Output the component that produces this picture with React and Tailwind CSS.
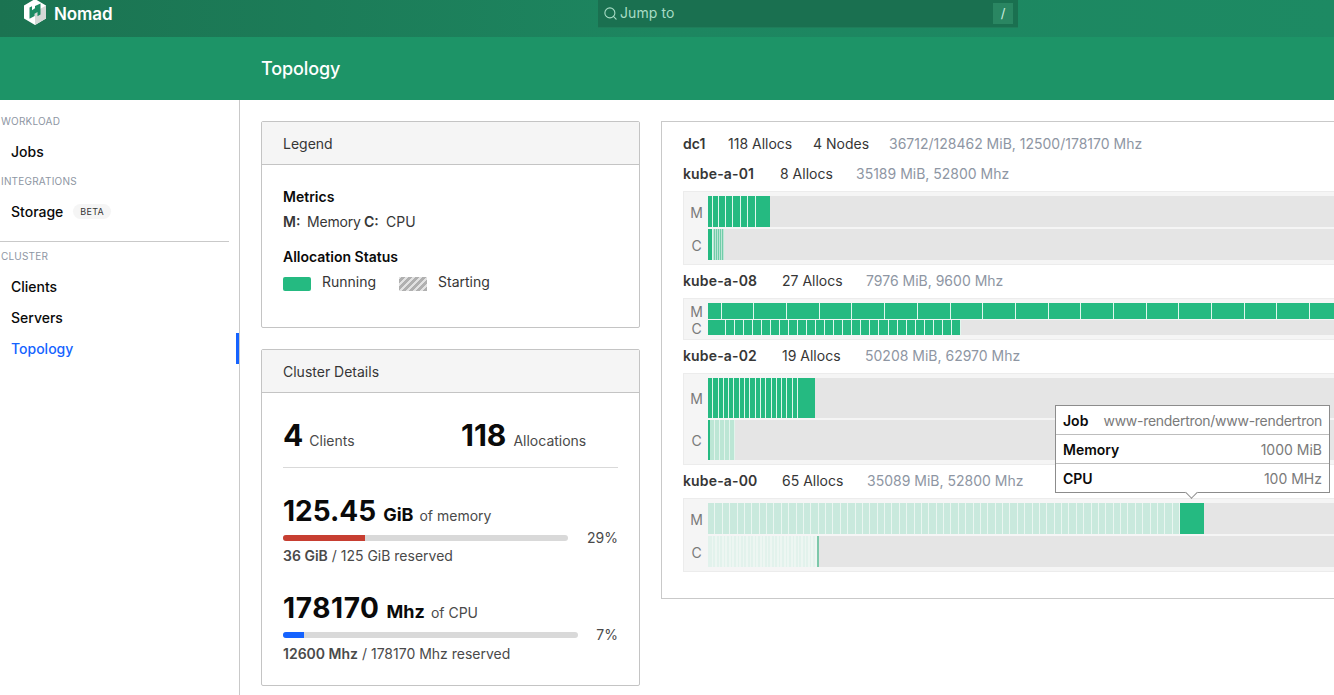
import { Search } from "lucide-react";

const tones = {
  solid: "bg-[#25ba81] border-r border-[#e0f7ee]",
  flat: "bg-[#25ba81]",
  thin: "bg-[#25ba81] opacity-60",
  light: "bg-[#bce6d5] border-r border-[#e2f4ec]",
  lightBare: "bg-[#bce6d5]",
  pale: "bg-[#c9e9dd] border-r border-[#eaf6f1]",
  faint: "bg-[#e2f2ec]",
  faintAlt: "bg-[#edf6f2]",
  mark: "bg-[#7cc8aa]",
};

const seg = (w, tone = "solid") => ({ w, tone });
const times = (n, w, tone) => Array.from({ length: n }, () => seg(w, tone));
const zebra = (n, w, a, b) => Array.from({ length: n }, (_, i) => seg(w, i % 2 ? b : a));

const nodes = [
  {
    name: "kube-a-01",
    allocs: "8 Allocs",
    nameWidth: "w-[97px]",
    allocWidth: "w-[76px]",
    stats: "35189 MiB, 52800 Mhz",
    row: "h-[31px]",
    cpuRow: "h-[31px]",
    gap: "mt-[2px]",
    mem: [seg(5), seg(6), seg(7), seg(7), seg(7.5), seg(7.5), seg(8), seg(14, "flat")],
    cpu: [seg(2, "flat"), seg(3, "solid"), ...zebra(11, 1, "lightBare", "thin")],
  },
  {
    name: "kube-a-08",
    allocs: "27 Allocs",
    nameWidth: "w-[99px]",
    allocWidth: "w-[84px]",
    stats: "7976 MiB, 9600 Mhz",
    row: "h-[16px]",
    cpuRow: "h-[15px]",
    gap: "mt-px",
    mem: [seg(13.7), ...times(20, 32.7)],
    cpu: [seg(17.7), ...times(26, 9.06)],
  },
  {
    name: "kube-a-02",
    allocs: "19 Allocs",
    nameWidth: "w-[99px]",
    allocWidth: "w-[83px]",
    stats: "50208 MiB, 62970 Mhz",
    row: "h-[40px]",
    cpuRow: "h-[40px]",
    gap: "mt-[2px]",
    mem: [...times(17, 5.3), seg(17, "flat")],
    cpu: [seg(2, "flat"), ...times(5, 5, "light")],
  },
  {
    name: "kube-a-00",
    allocs: "65 Allocs",
    nameWidth: "w-[99px]",
    allocWidth: "w-[85px]",
    stats: "35089 MiB, 52800 Mhz",
    row: "h-[31px]",
    cpuRow: "h-[31px]",
    gap: "mt-[2px]",
    mem: [...times(64, 7.375, "pale"), seg(24, "flat")],
    cpu: [seg(2, "faint"), ...zebra(62, 1.72, "faint", "faintAlt"), seg(2, "mark")],
  },
];

function Bar({ segs, className }) {
  return (
    <div className={`flex flex-1 bg-[#e5e5e5] ${className}`}>
      {segs.map((s, i) => (
        <div key={i} className={`flex-none box-border h-full ${tones[s.tone]}`} style={{ width: s.w }} />
      ))}
    </div>
  );
}

function Node({ node }) {
  return (
    <div>
      <div className="flex h-[33px] items-center pb-[2px] text-sm">
        <span className={`font-semibold tracking-[0.15px] text-[#363636] ${node.nameWidth}`}>{node.name}</span>
        <span className={`text-[#363636] ${node.allocWidth}`}>{node.allocs}</span>
        <span className="text-[#8e96a3]">{node.stats}</span>
      </div>
      <div className="border border-[#ececec] bg-[#f5f5f5] py-1">
        <div className={`flex ${node.row}`}>
          <div className="flex w-[24px] flex-none items-center justify-center pt-[2px] pl-px text-sm text-[#7a7a7a]">M</div>
          <Bar segs={node.mem} className={node.row} />
        </div>
        <div className={`flex ${node.cpuRow} ${node.gap}`}>
          <div className="flex w-[24px] flex-none items-center justify-center pt-[2px] pl-px text-sm text-[#7a7a7a]">C</div>
          <Bar segs={node.cpu} className={node.cpuRow} />
        </div>
      </div>
    </div>
  );
}

function Card({ title, className, children }) {
  return (
    <div className={`rounded-[2px] border border-[#c4c4c4] bg-white ${className}`}>
      <div className="flex h-[43px] items-center border-b border-[#c4c4c4] bg-[#f5f5f5] px-[21px] pt-px text-sm text-[#363636]">
        {title}
      </div>
      {children}
    </div>
  );
}

function NavLabel({ children, className = "" }) {
  return <div className={`pl-px text-[10px] leading-[14px] tracking-[0.2px] text-[#8e96a3] uppercase ${className}`}>{children}</div>;
}

function NavItem({ children, active }) {
  return (
    <div
      className={`flex h-[31px] items-center border-r-[3px] pl-[11px] text-sm font-medium ${
        active ? "border-[#1563ff] text-[#1563ff]" : "border-transparent text-[#0a0a0a]"
      }`}
    >
      {children}
    </div>
  );
}

function Metric({ value, valueClass = "", unit, label, barWidth, fill, fillWidth, pct, used, total, footClass = "mt-px" }) {
  return (
    <div>
      <div className="flex h-[32px] items-baseline text-[#0a0a0a]">
        <span className={`text-[28px] leading-[32px] font-bold ${valueClass}`}>{value}</span>
        <span className="ml-[7px] text-lg font-bold">{unit}</span>
        <span className="ml-[6px] text-sm text-[#4a4a4a]">{label}</span>
      </div>
      <div className="mt-[4px] flex h-[14px] items-center justify-between">
        <div className={`h-[6px] overflow-hidden rounded-full bg-[#d9d9d9] ${barWidth}`}>
          <div className={`h-full ${fill} ${fillWidth}`} />
        </div>
        <span className="text-sm text-[#4a4a4a]">{pct}</span>
      </div>
      <div className={`text-sm leading-[20px] text-[#4a4a4a] ${footClass}`}>
        <span className="font-semibold">{used}</span> / {total}
      </div>
    </div>
  );
}

export default function App() {
  return (
    <div className="h-[695px] w-[1334px] overflow-hidden bg-white font-['Inter',sans-serif]">
      <div className="relative flex h-[37px] overflow-hidden bg-gradient-to-r from-[#1b7351] via-[#1d8660] to-[#1d8a63]">
        <div className="flex w-[598px] flex-none items-start pl-6">
          <svg viewBox="0 0 22 26" className="-mt-px h-[26px] w-[22px] flex-none">
            <path d="M11 0 22 6.5v13L11 26 0 19.5v-13Z" fill="#fff" />
            <path d="M11 13 22 6.5v13L11 26Z" fill="#d4d8d6" />
            <path d="M5.5 8.5 8 7.2v4l3-1.9V7l5.5-2.6v11.2l-3 1.7v-4.2l-2.9 1.7V17l-5.1 2.8Z" fill="#1d8a63" />
          </svg>
          <span className="mt-[4px] ml-2 text-[17px] leading-[20px] font-semibold tracking-[-0.1px] text-white">Nomad</span>
        </div>
        <div className="flex h-[28px] w-[420px] flex-none items-center border-b border-[#1f7d5a] bg-[#1a7050] px-[5px] pb-px text-sm text-[#a8dcc5]">
          <Search className="h-[15px] w-[15px] flex-none" strokeWidth={1.75} />
          <span className="ml-[2px] flex-1 tracking-[0.1px]">Jump to</span>
          <span className="flex h-[21px] w-[20px] items-center justify-center bg-[#2a8662] text-[13px] text-[#cdeee0]">/</span>
        </div>
      </div>

      <div className="flex h-[63px] items-center bg-[#1d9467] pt-px pl-[261px] text-lg font-medium tracking-[-0.1px] text-white">Topology</div>

      <div className="flex h-[595px] overflow-hidden">
        <div className="w-[240px] flex-none border-r border-[#c9c9c9] pt-[14px]">
          <NavLabel>Workload</NavLabel>
          <div className="mt-[8px]">
            <NavItem>Jobs</NavItem>
          </div>
          <NavLabel className="mt-[7px]">Integrations</NavLabel>
          <div className="mt-[8px]">
            <NavItem>
              Storage
              <span className="ml-[10px] rounded-full bg-[#f5f5f5] px-[7px] py-px text-[9px] leading-[13px] font-normal tracking-[0.3px] text-[#363636]">
                BETA
              </span>
            </NavItem>
          </div>
          <div className="mt-[14px] mr-[10px] border-t border-[#c9c9c9]" />
          <NavLabel className="mt-[7px]">Cluster</NavLabel>
          <div className="mt-[8px]">
            <NavItem>Clients</NavItem>
            <NavItem>Servers</NavItem>
            <NavItem active>Topology</NavItem>
          </div>
        </div>

        <div className="flex flex-none gap-[21px] pt-[21px] pl-[21px]">
          <div className="flex w-[379px] flex-none flex-col gap-[21px]">
            <Card title="Legend" className="h-[207px]">
              <div className="px-[21px] pt-[22px] text-sm text-[#363636]">
                <div className="leading-[20px] font-semibold text-[#0a0a0a]">Metrics</div>
                <div className="mt-[5px] flex leading-[20px]">
                  <strong className="w-[24px] font-semibold">M:</strong>
                  <span className="w-[57px] tracking-[-0.2px]">Memory</span>
                  <strong className="w-[22px] font-semibold">C:</strong>
                  <span>CPU</span>
                </div>
                <div className="mt-[15px] leading-[20px] font-semibold text-[#0a0a0a]">Allocation Status</div>
                <div className="mt-[5px] flex h-[20px] items-center">
                  <span className="mt-[3px] h-[14px] w-[28px] rounded-[2px] bg-[#25ba81]" />
                  <span className="ml-[11px] w-[64px]">Running</span>
                  <span className="mt-[3px] ml-[13px] h-[14px] w-[28px] bg-[repeating-linear-gradient(-45deg,#b0b0b0_0,#b0b0b0_3px,#e2e2e2_3px,#e2e2e2_5px)]" />
                  <span className="ml-[11px]">Starting</span>
                </div>
              </div>
            </Card>

            <Card title="Cluster Details" className="h-[337px]">
              <div className="px-[21px] pt-[24px]">
                <div className="flex h-[51px] items-start border-b border-[#d9d9d9] text-[#4a4a4a]">
                  <div className="flex w-[178px] items-baseline">
                    <span className="text-[30px] leading-[36px] font-bold text-[#0a0a0a]">4</span>
                    <span className="ml-[6px] text-sm">Clients</span>
                  </div>
                  <div className="flex items-baseline">
                    <span className="text-[30px] leading-[36px] font-bold text-[#0a0a0a]">118</span>
                    <span className="ml-[7px] text-sm">Allocations</span>
                  </div>
                </div>
                <div className="mt-[27px]">
                  <Metric
                    value="125.45"
                    unit="GiB"
                    label="of memory"
                    barWidth="w-[285px]"
                    fill="bg-[#c73e31]"
                    fillWidth="w-[82px]"
                    pct="29%"
                    used="36 GiB"
                    total="125 GiB reserved"
                  />
                </div>
                <div className="mt-[26px]">
                  <Metric
                    value="178170"
                    valueClass="tracking-[0.6px]"
                    unit="Mhz"
                    label="of CPU"
                    barWidth="w-[295px]"
                    fill="bg-[#1563ff]"
                    fillWidth="w-[21px]"
                    pct="7%"
                    used="12600 Mhz"
                    total="178170 Mhz reserved"
                    footClass="mt-[2px]"
                  />
                </div>
              </div>
            </Card>
          </div>

          <div className="relative h-[478px] w-[720px] flex-none border border-[#c9c9c9] bg-white pt-[7px] pl-[21px]">
            <div className="flex h-[29px] items-center text-sm text-[#363636]">
              <span className="w-[45px] font-semibold">dc1</span>
              <span className="w-[85px]">118 Allocs</span>
              <span className="w-[76px]">4 Nodes</span>
              <span className="text-[#8e96a3]">36712/128462 MiB, 12500/178170 Mhz</span>
            </div>
            {nodes.map((node) => (
              <Node key={node.name} node={node} />
            ))}

            <div className="absolute top-[283px] left-[393px] w-[275px] border border-[#8c8c8c] bg-white text-sm text-[#7a7a7a]">
              <div className="flex h-[29px] items-center justify-between border-b border-[#bdbdbd] px-[7px] pt-px">
                <span className="font-semibold text-[#0a0a0a]">Job</span>
                <span className="tracking-[-0.28px]">www-rendertron/www-rendertron</span>
              </div>
              <div className="flex h-[29px] items-center justify-between border-b border-[#bdbdbd] px-[7px] pt-px">
                <span className="font-semibold text-[#0a0a0a]">Memory</span>
                <span>1000 MiB</span>
              </div>
              <div className="flex h-[28px] items-center justify-between px-[7px] pt-px">
                <span className="font-semibold text-[#0a0a0a]">CPU</span>
                <span>100 MHz</span>
              </div>
              <div className="absolute -bottom-[5px] left-[131px] h-[9px] w-[9px] rotate-45 border-r border-b border-[#8c8c8c] bg-white" />
            </div>
          </div>
        </div>
      </div>
    </div>
  );
}
